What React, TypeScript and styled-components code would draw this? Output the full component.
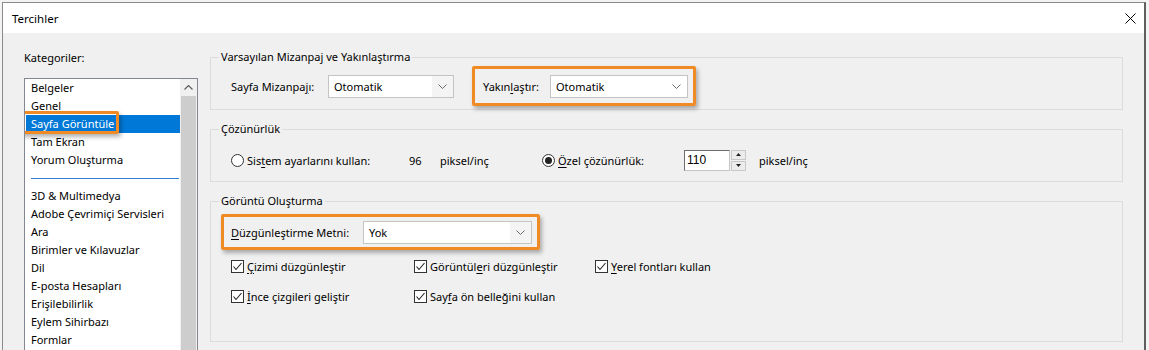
import React from 'react'
import styled, { createGlobalStyle } from 'styled-components'

const GlobalStyle = createGlobalStyle`
  html, body {
    margin: 0;
    padding: 0;
  }
  body {
    width: 1149px;
    height: 350px;
    overflow: hidden;
    background: #f3f3f3;
    font-family: 'Noto Sans', 'Open Sans', sans-serif;
    font-size: 11px;
    color: #000;
  }
`

const Window = styled.div`
  margin: 2px 0 0 2px;
  width: 1141px;
  height: 347px;
  border: 1px solid #8a8a8a;
  border-right: 2px solid #5f5f5f;
  border-bottom: none;
  background: #f0f0f0;
  display: flex;
  flex-direction: column;
  overflow: hidden;
`

const TitleBar = styled.div`
  height: 30px;
  flex: none;
  background: #fff;
  display: flex;
  align-items: center;
  justify-content: space-between;
  padding: 0 8px 0 9px;
  font-size: 11.5px;
`

const Body = styled.div`
  flex: 1;
  min-height: 0;
  display: flex;
  gap: 12px;
  padding: 0 21px;
`

const Sidebar = styled.div`
  width: 174px;
  flex: none;
  display: flex;
  flex-direction: column;
  padding-top: 17px;
`

const Caption = styled.div`
  line-height: 16px;
  margin-bottom: 12px;
`

const ListBox = styled.div`
  flex: 1;
  min-height: 0;
  overflow: hidden;
  border: 1px solid #828790;
  border-bottom: none;
  background: #fff;
  display: flex;
`

const Items = styled.div`
  flex: 1;
  padding-left: 1px;
`

const Item = styled.div<{ $selected?: boolean }>`
  height: 18px;
  line-height: 18px;
  padding-left: 5px;
  white-space: nowrap;
  background: ${(p) => (p.$selected ? '#0078d7' : 'transparent')};
  color: ${(p) => (p.$selected ? '#fff' : '#000')};
`

const Separator = styled.div`
  height: 18px;
  display: flex;
  align-items: center;
  padding: 0 1px 0 5px;

  &::after {
    content: '';
    flex: 1;
    height: 1px;
    background: #2f7fd0;
  }
`

const Marked = styled.span`
  position: relative;

  &::after {
    content: '';
    position: absolute;
    left: -12px;
    right: -5px;
    top: -5px;
    bottom: -3px;
    border: 3px solid #f08a24;
    border-radius: 2px;
    box-shadow: 2px 3px 4px rgba(0, 0, 0, 0.3);
  }
`

const Scrollbar = styled.div`
  width: 17px;
  flex: none;
  display: flex;
  flex-direction: column;
  background: #f0f0f0;
`

const ScrollArrow = styled.div`
  height: 17px;
  display: flex;
  align-items: center;
  justify-content: center;
`

const ScrollThumb = styled.div`
  flex: 1;
  margin: 0 1px;
  background: #cdcdcd;
`

const Main = styled.div`
  flex: 1;
  display: flex;
  flex-direction: column;
  gap: 11px;
  padding-top: 16px;
`

const Group = styled.fieldset`
  margin: 0;
  padding: 0 8px;
  min-width: 0;
  border: 1px solid #dcdcdc;
`

const Legend = styled.legend`
  padding: 0 2px;
  line-height: 16px;
`

const GroupBody = styled.div<{ $pad: string }>`
  padding: ${(p) => p.$pad};
`

const Row = styled.div<{ $h: number }>`
  height: ${(p) => p.$h}px;
  display: flex;
  align-items: center;
`

const Label = styled.span<{ $w?: number }>`
  flex: none;
  width: ${(p) => (p.$w ? `${p.$w}px` : 'auto')};
  white-space: nowrap;
`

const Key = styled.span`
  text-decoration: underline;
  text-underline-offset: 2px;
`

const Callout = styled.div<{ $h: number; $shift?: number; $left?: number }>`
  height: ${(p) => p.$h}px;
  box-sizing: border-box;
  display: flex;
  align-items: center;
  margin-left: ${(p) => p.$shift ?? 0}px;
  padding: 0 5px 0 ${(p) => p.$left ?? 8}px;
  border: 3px solid #f08a24;
  border-radius: 2px;
  box-shadow: 2px 3px 4px rgba(0, 0, 0, 0.3);
`

const Combo = styled.div<{ $w: number }>`
  width: ${(p) => p.$w}px;
  height: 23px;
  box-sizing: border-box;
  flex: none;
  display: flex;
  align-items: center;
  border: 1px solid #c4c4c4;
  background: #fff;
`

const ComboText = styled.span`
  flex: 1;
  padding-left: 5px;
`

const ComboButton = styled.span<{ $shade?: boolean }>`
  width: 21px;
  height: 100%;
  display: flex;
  align-items: center;
  justify-content: center;
  background: ${(p) => (p.$shade ? '#f4f4f4' : 'transparent')};
`

const Cell = styled.div<{ $w?: number; $gap?: number }>`
  flex: none;
  width: ${(p) => (p.$w ? `${p.$w}px` : 'auto')};
  margin-left: ${(p) => p.$gap ?? 0}px;
  display: flex;
  align-items: center;
  gap: 3px;
  white-space: nowrap;
`

const Radio = styled.span<{ $on?: boolean }>`
  width: 13px;
  height: 13px;
  box-sizing: border-box;
  flex: none;
  border: 1px solid #333;
  border-radius: 50%;
  background: #fff;
  display: flex;
  align-items: center;
  justify-content: center;

  &::after {
    content: '';
    width: 7px;
    height: 7px;
    border-radius: 50%;
    background: #222;
    display: ${(p) => (p.$on ? 'block' : 'none')};
  }
`

const Spin = styled.div`
  display: flex;
  height: 21px;
`

const SpinInput = styled.div`
  width: 46px;
  box-sizing: border-box;
  border: 1px solid #c4c4c4;
  border-top-color: #6d6d6d;
  border-left-color: #6d6d6d;
  background: #fff;
  padding-left: 2px;
  line-height: 19px;
  font-family: 'Liberation Sans', Arial, sans-serif;
  font-size: 12px;
`

const SpinButtons = styled.div`
  width: 15px;
  display: flex;
  flex-direction: column;
  gap: 1px;
  margin-left: 1px;
`

const SpinButton = styled.div`
  flex: 1;
  border: 1px solid #c8c8c8;
  background: #ececec;
  display: flex;
  align-items: center;
  justify-content: center;
`

const Checks = styled.div`
  display: grid;
  grid-template-columns: 183px 181px auto;
  row-gap: 12px;
  margin-top: 7px;
`

const Check = styled.div`
  height: 18px;
  display: flex;
  align-items: center;
  gap: 3px;
  white-space: nowrap;
`

const Box = styled.span`
  width: 13px;
  height: 13px;
  box-sizing: border-box;
  flex: none;
  border: 1px solid #333;
  background: #fff;
  display: flex;
  align-items: center;
  justify-content: center;
`

const Chevron = () => (
  <svg width="9" height="5" viewBox="0 0 9 5">
    <polyline points="0.5,0.5 4.5,4.5 8.5,0.5" fill="none" stroke="#6a6a6a" strokeWidth="1" />
  </svg>
)

const Tick = () => (
  <svg width="11" height="11" viewBox="0 0 11 11">
    <polyline points="1.5,5.5 4,8.5 9.5,2" fill="none" stroke="#222" strokeWidth="1.1" />
  </svg>
)

const Close = () => (
  <svg width="11" height="11" viewBox="0 0 11 11">
    <path d="M0.5 0.5 L10.5 10.5 M10.5 0.5 L0.5 10.5" stroke="#000" strokeWidth="1" />
  </svg>
)

const categories = [
  'Belgeler',
  'Genel',
  'Sayfa Görüntüle',
  'Tam Ekran',
  'Yorum Oluşturma',
  '-',
  '3D & Multimedya',
  'Adobe Çevrimiçi Servisleri',
  'Ara',
  'Birimler ve Kılavuzlar',
  'Dil',
  'E-posta Hesapları',
  'Erişilebilirlik',
  'Eylem Sihirbazı',
  'Formlar',
]

const checks: React.ReactNode[] = [
  <>
    <Key>Ç</Key>izimi düzgünleştir
  </>,
  <>
    Görüntül<Key>e</Key>ri düzgünleştir
  </>,
  <>
    <Key>Y</Key>erel fontları kullan
  </>,
  <>
    <Key>İ</Key>nce çizgileri geliştir
  </>,
  <>
    Say<Key>f</Key>a ön belleğini kullan
  </>,
]

const App = (): JSX.Element => {
  return (
    <Window>
      <GlobalStyle />
      <TitleBar>
        <span>Tercihler</span>
        <Close />
      </TitleBar>
      <Body>
        <Sidebar>
          <Caption>Kategoriler:</Caption>
          <ListBox>
            <Items>
              {categories.map((c) =>
                c === '-' ? (
                  <Separator key="sep" />
                ) : c === 'Sayfa Görüntüle' ? (
                  <Item key={c} $selected>
                    <Marked>{c}</Marked>
                  </Item>
                ) : (
                  <Item key={c}>{c}</Item>
                )
              )}
            </Items>
            <Scrollbar>
              <ScrollArrow>
                <svg width="9" height="5" viewBox="0 0 9 5">
                  <polyline points="0.5,4.5 4.5,0.5 8.5,4.5" fill="none" stroke="#606060" strokeWidth="1.2" />
                </svg>
              </ScrollArrow>
              <ScrollThumb />
            </Scrollbar>
          </ListBox>
        </Sidebar>

        <Main>
          <Group>
            <Legend>Varsayılan Mizanpaj ve Yakınlaştırma</Legend>
            <GroupBody $pad="1px 0 3px 12px">
              <Row $h={40}>
                <Label $w={97}>
                  Sayfa Mizanpa<Key>j</Key>ı:
                </Label>
                <Combo $w={126}>
                  <ComboText>Otomatik</ComboText>
                  <ComboButton $shade>
                    <Chevron />
                  </ComboButton>
                </Combo>
                <Callout $h={40} $shift={18}>
                  <Label $w={67}>
                    Yakın<Key>l</Key>aştır:
                  </Label>
                  <Combo $w={138}>
                    <ComboText>Otomatik</ComboText>
                    <ComboButton>
                      <Chevron />
                    </ComboButton>
                  </Combo>
                </Callout>
              </Row>
            </GroupBody>
          </Group>

          <Group>
            <Legend>Çözünürlük</Legend>
            <GroupBody $pad="12px 0 10px 12px">
              <Row $h={22}>
                <Cell $w={178}>
                  <Radio />
                  <span>
                    Sis<Key>t</Key>em ayarlarını kullan:
                  </span>
                </Cell>
                <Cell $w={31}>96</Cell>
                <Cell $w={102}>piksel/inç</Cell>
                <Cell $w={142}>
                  <Radio $on />
                  <span>
                    <Key>Ö</Key>zel çözünürlük:
                  </span>
                </Cell>
                <Spin>
                  <SpinInput>110</SpinInput>
                  <SpinButtons>
                    <SpinButton>
                      <svg width="5" height="3" viewBox="0 0 5 3">
                        <polygon points="0,3 2.5,0 5,3" fill="#222" />
                      </svg>
                    </SpinButton>
                    <SpinButton>
                      <svg width="5" height="3" viewBox="0 0 5 3">
                        <polygon points="0,0 2.5,3 5,0" fill="#222" />
                      </svg>
                    </SpinButton>
                  </SpinButtons>
                </Spin>
                <Cell $gap={13}>piksel/inç</Cell>
              </Row>
            </GroupBody>
          </Group>

          <Group>
            <Legend>Görüntü Oluşturma</Legend>
            <GroupBody $pad="5px 0 36px 12px">
              <Row $h={36}>
                <Callout $h={36} $shift={-10} $left={7}>
                  <Label $w={132}>
                    <Key>D</Key>üzgünleştirme Metni:
                  </Label>
                  <Combo $w={169}>
                    <ComboText>Yok</ComboText>
                    <ComboButton $shade>
                      <Chevron />
                    </ComboButton>
                  </Combo>
                </Callout>
              </Row>
              <Checks>
                {checks.map((label, i) => (
                  <Check key={i}>
                    <Box>
                      <Tick />
                    </Box>
                    <span>{label}</span>
                  </Check>
                ))}
              </Checks>
            </GroupBody>
          </Group>
        </Main>
      </Body>
    </Window>
  )
}

export default App
